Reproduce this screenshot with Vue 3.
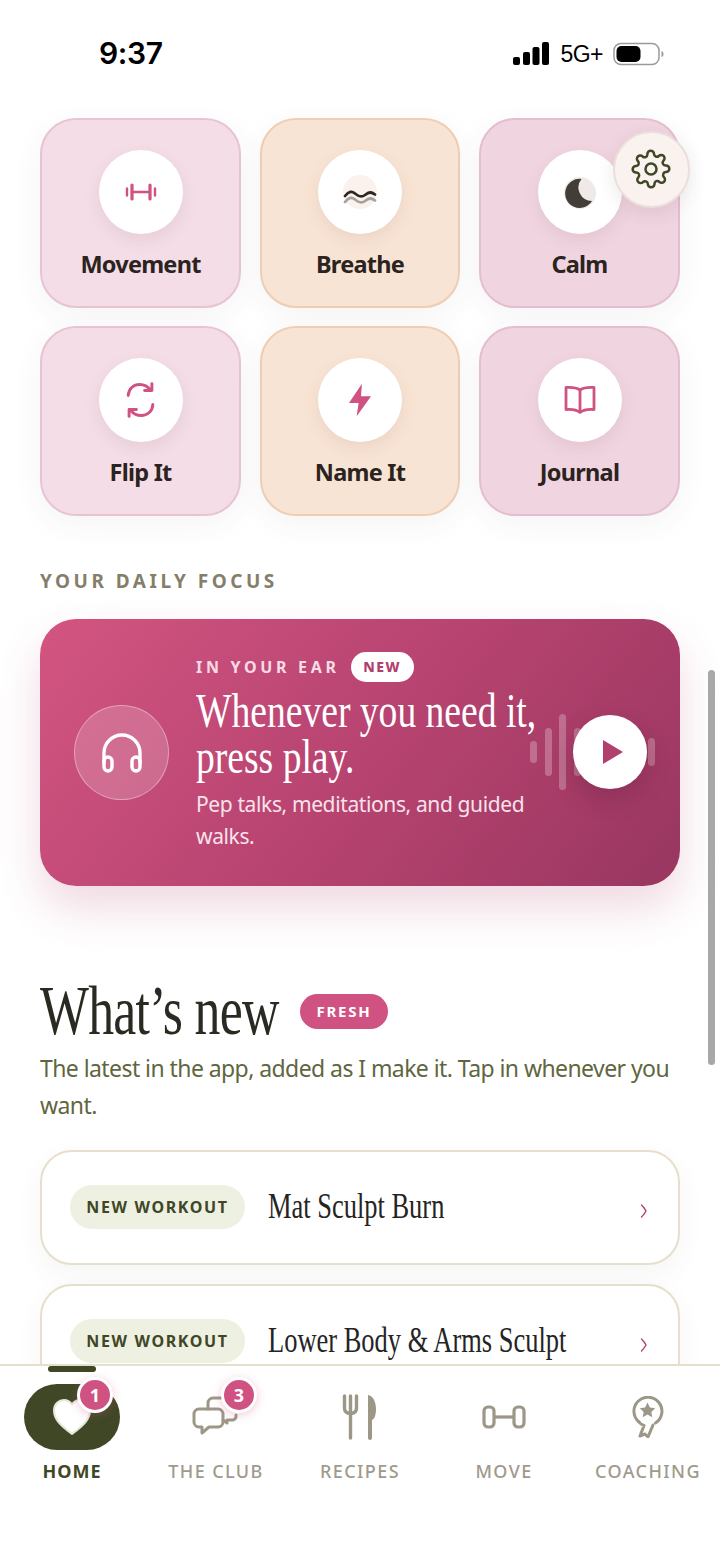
<script setup>
const tiles = [
  { label: 'Movement', tone: 'rose', icon: 'dumbbell' },
  { label: 'Breathe', tone: 'peach', icon: 'wave' },
  { label: 'Calm', tone: 'mauve', icon: 'moon' },
  { label: 'Flip It', tone: 'rose', icon: 'flip' },
  { label: 'Name It', tone: 'peach', icon: 'bolt' },
  { label: 'Journal', tone: 'mauve', icon: 'book' },
]
const news = ['Mat Sculpt Burn', 'Lower Body & Arms Sculpt']
const bars = [22, 48, 76, 48, 28]
</script>

<template>
  <div class="phone">
    <header class="status">
      <span class="time">9:37</span>
      <div class="status-right">
        <svg width="36" height="24" viewBox="0 0 36 24" class="signal">
          <rect x="0" y="15" width="7" height="8" rx="2" />
          <rect x="10" y="10" width="7" height="13" rx="2" />
          <rect x="19.500" y="5" width="7" height="18" rx="2" />
          <rect x="29" y="0" width="7" height="23" rx="2" />
        </svg>
        <span class="net">5G+</span>
        <svg width="51" height="24" viewBox="0 0 51 24" class="battery">
          <rect x="1" y="1.500" width="45" height="21" rx="7" fill="none" stroke="#9a9a9a" stroke-width="1.500" />
          <rect x="3.500" y="4" width="24" height="16" rx="5" fill="#000" />
          <path d="M48.500 9c1.500.5 2 1.500 2 3s-.5 2.500-2 3z" fill="#9a9a9a" />
        </svg>
      </div>
    </header>

    <main class="content">
      <div class="tiles">
        <button v-for="t in tiles" :key="t.label" class="tile" :class="t.tone">
          <span class="disc">
            <svg v-if="t.icon === 'dumbbell'" width="32" height="32" viewBox="0 0 32 32" fill="none" stroke="#cf5282" stroke-linecap="round">
              <path d="M2 12.500v7M30 12.500v7" stroke-width="2.400" />
              <path d="M7 9v14M25 9v14" stroke-width="3.200" />
              <path d="M7 16h18" stroke-width="2.400" />
            </svg>
            <template v-else-if="t.icon === 'wave'">
              <span class="halo"></span>
              <svg class="halo-icon" width="34" height="20" viewBox="0 0 34 20" fill="none" stroke-linecap="round" stroke-width="2.800">
                <path d="M2 9c4-5 7-5 10-2.500s6 4.500 10 1.500 6-3.500 10-.5" stroke="#a5a29c" transform="translate(0 6)" />
                <path d="M2 9c4-5 7-5 10-2.500s6 4.500 10 1.500 6-3.500 10-.5" stroke="#2c2723" />
              </svg>
            </template>
            <template v-else-if="t.icon === 'moon'">
              <span class="halo grey"></span>
              <svg class="moon-icon" width="30" height="30" viewBox="0 0 30 30">
                <path d="M18.500 1A14.500 14.500 0 1 0 29 23 13.500 13.500 0 0 1 18.500 1z" fill="#423e37" />
              </svg>
            </template>
            <svg v-else-if="t.icon === 'flip'" width="31" height="38" viewBox="0 0 34 40" fill="none" stroke="#cf5282" stroke-width="3.200" stroke-linecap="round" stroke-linejoin="round">
              <path d="M3.500 15C4 7 10 3 16 3c5 0 9 2 12 6" />
              <path d="M29.500 2v7.500h-8" />
              <path d="M30.500 25c-.5 8-6.500 12-12.500 12-5 0-9-2-12-6" />
              <path d="M4.500 38v-7.500h8" />
            </svg>
            <svg v-else-if="t.icon === 'bolt'" width="25" height="34" viewBox="0 0 26 34">
              <path d="M14.500 0 1 20h10l-2 14 15-21H13.500z" fill="#cf5282" />
            </svg>
            <svg v-else width="32" height="30" viewBox="0 0 32 30" fill="none" stroke="#cf5282" stroke-width="2.800" stroke-linejoin="round">
              <path d="M16 5C13 3 8 2 2 2.500v22c6-.5 11 .5 14 3 3-2.500 8-3.500 14-3v-22C24 2 19 3 16 5z" />
              <path d="M16 5v22" />
            </svg>
          </span>
          <span class="tile-label">{{ t.label }}</span>
        </button>
      </div>

      <h2 class="eyebrow">YOUR DAILY FOCUS</h2>

      <section class="hero">
        <div class="hero-icon">
          <svg width="42" height="40" viewBox="0 0 42 40" fill="none" stroke="#fff" stroke-width="3.400" stroke-linecap="round">
            <path d="M3 30V20a18 18 0 0 1 36 0v10" />
            <rect x="3" y="24" width="8" height="14" rx="4" />
            <rect x="31" y="24" width="8" height="14" rx="4" />
          </svg>
        </div>
        <div class="hero-copy">
          <div class="hero-top">
            <span class="hero-kicker">IN YOUR EAR</span>
            <span class="hero-new">NEW</span>
          </div>
          <p class="hero-title"><span>Whenever you need it,</span><span>press play.</span></p>
          <p class="hero-sub">Pep talks, meditations, and guided walks.</p>
        </div>
        <div class="hero-play">
          <div class="bars">
            <i v-for="(b, n) in bars" :key="n" :style="{ height: b + 'px' }"></i>
          </div>
          <button class="play">
            <svg width="22" height="26" viewBox="0 0 22 26"><path d="M1 1v24l20-12z" fill="#b2406d" /></svg>
          </button>
        </div>
      </section>

      <div class="new-head">
        <h1 class="new-title"><span>What’s new</span></h1>
        <span class="fresh">FRESH</span>
      </div>
      <p class="new-desc">The latest in the app, added as I make it. Tap in whenever you want.</p>

      <div class="news">
        <a v-for="n in news" :key="n" class="news-card">
          <span class="news-tag">NEW WORKOUT</span>
          <span class="news-name"><span>{{ n }}</span></span>
          <svg class="chev" width="8" height="14" viewBox="0 0 8 14" fill="none" stroke="#b2406d" stroke-width="1.400" stroke-linecap="round"><path d="M1.500 1c2 2 3.500 4 4.500 6-1 2-2.500 4-4.500 6" /></svg>
        </a>
      </div>
    </main>

    <button class="gear">
      <svg width="40" height="40" viewBox="0 0 24 24" fill="none" stroke="#3f4726" stroke-width="1.500" stroke-linecap="round" stroke-linejoin="round">
        <circle cx="12" cy="12" r="3.300" />
        <path d="M19.400 15a1.650 1.650 0 0 0 .33 1.820l.06.06a2 2 0 1 1-2.830 2.830l-.06-.06a1.650 1.650 0 0 0-2.800 1.170V21a2 2 0 0 1-4 0v-.09a1.650 1.650 0 0 0-2.820-1.110l-.06.06a2 2 0 1 1-2.830-2.830l.06-.06a1.650 1.650 0 0 0-1.170-2.800H3a2 2 0 0 1 0-4h.09A1.650 1.650 0 0 0 4.200 7.350l-.06-.06a2 2 0 1 1 2.830-2.830l.06.06a1.650 1.650 0 0 0 2.800-1.170V3a2 2 0 0 1 4 0v.09a1.650 1.650 0 0 0 2.820 1.110l.06-.06a2 2 0 1 1 2.830 2.830l-.06.06a1.650 1.650 0 0 0 1.170 2.800H21a2 2 0 0 1 0 4h-.09a1.650 1.650 0 0 0-1.510 1z" />
      </svg>
    </button>
    <div class="scrollbar"></div>

    <nav class="tabbar">
      <div class="tab active">
        <span class="marker"></span>
        <div class="tab-icon home-pill">
          <svg width="40" height="38" viewBox="0 0 40 38">
            <path d="M20 36C8 27 2 21 2 12.500 2 6 7 2 12 2c3.500 0 6 1.500 8 4.500C22 3.500 24.500 2 28 2c5 0 10 4 10 10.500C38 21 32 27 20 36z" fill="#fff" stroke="#e6e8d6" stroke-width="2" stroke-linejoin="round" />
          </svg>
          <span class="badge home-badge">1</span>
        </div>
        <span class="tab-label">HOME</span>
      </div>
      <div class="tab">
        <div class="tab-icon">
          <svg width="48" height="44" viewBox="0 0 48 44" fill="none" stroke="#9d9788" stroke-width="3" stroke-linecap="round" stroke-linejoin="round">
            <path d="M7 14h19a5 5 0 0 1 5 5v8a5 5 0 0 1-5 5H17l-7 6v-6H7a5 5 0 0 1-5-5v-8a5 5 0 0 1 5-5z" />
            <path d="M16 14V8a5 5 0 0 1 5-5h9M31 25l4 3v-3h6a4 4 0 0 0 3-3v-2" />
          </svg>
          <span class="badge club-badge">3</span>
        </div>
        <span class="tab-label">THE CLUB</span>
      </div>
      <div class="tab">
        <div class="tab-icon">
          <svg width="36" height="48" viewBox="0 0 36 48" fill="none" stroke="#9d9788" stroke-linecap="round">
            <path d="M2.500 3v12c0 4 2.500 5.500 6 5.500s6-1.500 6-5.500V3M8.500 3v42" stroke-width="3.400" />
            <path d="M26 2c5 .5 8 7 8 14 0 6-1.500 10-4 11v18a2 2 0 0 1-4 0z" fill="#9d9788" stroke="none" />
          </svg>
        </div>
        <span class="tab-label">RECIPES</span>
      </div>
      <div class="tab">
        <div class="tab-icon">
          <svg width="44" height="24" viewBox="0 0 44 24" fill="none" stroke="#9d9788" stroke-width="3.200">
            <rect x="2" y="2" width="10" height="20" rx="4" />
            <rect x="32" y="2" width="10" height="20" rx="4" />
            <path d="M12 12h20" />
          </svg>
        </div>
        <span class="tab-label">MOVE</span>
      </div>
      <div class="tab">
        <div class="tab-icon">
          <svg width="32" height="42" viewBox="0 0 32 42" fill="none" stroke="#9d9788" stroke-width="3" stroke-linejoin="round" stroke-linecap="round">
            <path d="M7 26A14 14 0 1 1 23.500 27" />
            <path d="M7 26c1 1.500 3 3 5 3.500L8 40l5-2 3 3 5-12" />
            <path d="M15.500 6.500l2.400 5 5.300.7-3.900 3.700 1 5.300-4.800-2.600-4.800 2.600 1-5.300-3.900-3.700 5.300-.7z" fill="#9d9788" stroke="none" />
          </svg>
        </div>
        <span class="tab-label">COACHING</span>
      </div>
    </nav>
  </div>
</template>

<style>
html, body { margin: 0; background: #fff; }
</style>

<style scoped>
.phone {
  position: relative;
  width: 720px;
  height: 1560px;
  overflow: hidden;
  display: flex;
  flex-direction: column;
  background: #fff;
  font-family: "Noto Sans", sans-serif;
}
.status {
  height: 108px;
  flex: none;
  display: flex;
  justify-content: space-between;
  align-items: flex-start;
  padding: 35px 56px 0 99px;
  box-sizing: border-box;
}
.time {
  font: 600 30px/36px Inter, sans-serif;
  color: #000;
  letter-spacing: -0.4px;
}
.status-right { display: flex; align-items: center; gap: 10px; margin-top: 6px; }
.signal { fill: #000; margin-right: 1px; }
.net {
  font: 500 23px/26px "Liberation Sans", sans-serif;
  letter-spacing: -0.5px;
  color: #000;
}
.content {
  flex: 1;
  min-height: 0;
  overflow: hidden;
  padding: 10px 40px 0;
}
.tiles {
  display: grid;
  grid-template-columns: 201px 200px 201px;
  gap: 18px 19px;
}
.tile {
  height: 190px;
  box-sizing: border-box;
  border-radius: 36px;
  border: 2px solid;
  padding: 30px 0 0;
  display: flex;
  flex-direction: column;
  align-items: center;
  box-shadow: 0 8px 30px rgba(110, 70, 80, .06);
  font-family: inherit;
}
.rose { background: #f4dde7; border-color: #e8c3d4; }
.peach { background: #f8e4d4; border-color: #efcdb3; }
.mauve { background: #f0d4e0; border-color: #e5bdd0; }
.disc {
  position: relative;
  width: 84px;
  height: 84px;
  border-radius: 50%;
  background: #fff;
  display: flex;
  align-items: center;
  justify-content: center;
  box-shadow: 0 6px 16px rgba(120, 80, 90, .1);
}
.halo {
  position: absolute;
  left: 25px;
  top: 25px;
  width: 34px;
  height: 34px;
  border-radius: 50%;
  background: #fbf1ed;
}
.halo.grey { background: #efe9e8; width: 32px; height: 32px; left: 26px; top: 27px; }
.halo-icon { position: relative; top: 5px; }
.moon-icon { position: relative; left: -2px; top: 1px; }
.tile-label {
  margin-top: 14px;
  font: 700 23.500px/32px "Noto Sans", sans-serif;
  letter-spacing: -0.75px;
  color: #2b2320;
}
.eyebrow {
  margin: 52px 0 0;
  font: 700 19px/26px "Noto Sans", sans-serif;
  letter-spacing: 3.500px;
  color: #857e6b;
}
.hero {
  margin-top: 25px;
  height: 267px;
  box-sizing: border-box;
  border-radius: 36px;
  background: linear-gradient(128deg, #d35581 0%, #b5426f 55%, #983760 100%);
  box-shadow: 0 22px 44px rgba(178, 64, 109, .2);
  display: flex;
  align-items: center;
  padding: 0 26px 0 34px;
  position: relative;
}
.hero-icon {
  flex: none;
  width: 95px;
  height: 95px;
  box-sizing: border-box;
  border-radius: 50%;
  background: rgba(255, 255, 255, .18);
  border: 1.500px solid rgba(255, 255, 255, .35);
  display: flex;
  align-items: center;
  justify-content: center;
}
.hero-copy { margin-left: 27px; width: 345px; color: #fff; }
.hero-top { display: flex; align-items: center; gap: 11px; margin-top: -1px; }
.hero-kicker {
  font: 700 16px/30px "Noto Sans", sans-serif;
  letter-spacing: 3.700px;
  color: #f8dbe6;
}
.hero-new {
  width: 63px;
  height: 30px;
  border-radius: 15px;
  background: #fff;
  color: #b2406d;
  font: 800 14px/30px "Noto Sans", sans-serif;
  letter-spacing: 1.500px;
  text-align: center;
}
.hero-title {
  margin: 6px 0 0;
  font: 400 48px/46px "Liberation Serif", serif;
  display: flex;
  flex-direction: column;
  white-space: nowrap;
}
.hero-title span {
  display: block;
  transform: scaleX(.783);
  transform-origin: left center;
}
.hero-sub {
  margin: 8px 0 0;
  font: 400 21px/32px "Noto Sans", sans-serif;
  letter-spacing: -0.38px;
  color: #f9e3eb;
}
.hero-play { position: absolute; right: 33px; top: 96px; }
.bars {
  position: absolute;
  left: -43px;
  top: 6px;
  height: 62px;
  display: flex;
  align-items: center;
  gap: 7.500px;
}
.bars i {
  display: block;
  width: 7px;
  border-radius: 4px;
  background: rgba(255, 255, 255, .25);
  flex: none;
}
.bars i:nth-child(4) { margin-right: 59.500px; }
.play {
  position: relative;
  width: 74px;
  height: 74px;
  border: 0;
  border-radius: 50%;
  background: #fff;
  box-shadow: 0 10px 24px rgba(70, 20, 40, .22);
  display: flex;
  align-items: center;
  justify-content: center;
  padding: 0 0 0 5px;
}
.new-head { margin-top: 87px; display: flex; align-items: center; gap: 21px; height: 76px; }
.new-title {
  margin: 0;
  width: 239px;
  flex: none;
  font: 400 70px/76px "Liberation Serif", serif;
  letter-spacing: -1px;
  color: #2b2a22;
  white-space: nowrap;
}
.new-title span {
  display: block;
  transform: scaleX(.74);
  transform-origin: left center;
}
.fresh {
  width: 88px;
  height: 35px;
  border-radius: 18px;
  background: #cf5282;
  color: #fff;
  font: 700 15px/35px "Noto Sans", sans-serif;
  letter-spacing: 1.800px;
  text-align: center;
}
.new-desc {
  margin: 0;
  padding-top: 1px;
  font: 400 23px/37px "Noto Sans", sans-serif;
  letter-spacing: -0.57px;
  color: #5f6640;
}
.news { margin-top: 26px; display: flex; flex-direction: column; gap: 19px; }
.news-card {
  height: 115px;
  flex: none;
  box-sizing: border-box;
  border: 2px solid #e7dfcd;
  border-radius: 32px;
  background: #fff;
  box-shadow: 0 10px 26px rgba(90, 80, 60, .06);
  display: flex;
  align-items: center;
  padding: 0 30px 0 28px;
}
.news-tag {
  width: 175px;
  height: 44px;
  flex: none;
  margin-bottom: 2px;
  border-radius: 22px;
  background: #eef0e2;
  color: #3f4726;
  font: 700 16px/44px "Noto Sans", sans-serif;
  letter-spacing: 1.650px;
  text-align: center;
}
.news-name {
  margin: 0 0 4px 23px;
  flex: 1 1 0;
  min-width: 0;
  font: 400 36px/44px "Liberation Serif", serif;
  color: #26241f;
  white-space: nowrap;
}
.news-name span {
  display: block;
  transform: scaleX(.735);
  transform-origin: left center;
}
.chev { flex: none; margin-top: 6px; }
.gear {
  position: absolute;
  left: 613px;
  top: 131px;
  width: 77px;
  height: 77px;
  box-sizing: border-box;
  border-radius: 50%;
  border: 2px solid #eadfdc;
  background: #f9f2ef;
  display: flex;
  align-items: center;
  justify-content: center;
  padding: 0 1px 2px 0;
  box-shadow: 0 6px 18px rgba(80, 60, 50, .1);
}
.scrollbar {
  position: absolute;
  left: 708px;
  top: 670px;
  width: 7px;
  height: 395px;
  border-radius: 4px;
  background: #a8a8a8;
}
.tabbar {
  height: 196px;
  flex: none;
  box-sizing: border-box;
  border-top: 2px solid #e7dfcd;
  background: #fff;
  display: grid;
  grid-template-columns: repeat(5, 144px);
  position: relative;
}
.tab {
  position: relative;
  display: flex;
  flex-direction: column;
  align-items: center;
  padding-top: 18px;
}
.tab-icon {
  position: relative;
  width: 96px;
  height: 66px;
  display: flex;
  align-items: center;
  justify-content: center;
}
.home-pill { background: #3f4726; border-radius: 33px; }
.marker {
  position: absolute;
  top: 0;
  left: 48px;
  width: 48px;
  height: 6px;
  border-radius: 3px;
  background: #3f4726;
}
.badge {
  position: absolute;
  box-sizing: content-box;
  border-radius: 50%;
  background: #cf5282;
  border: 3px solid #fff;
  color: #fff;
  text-align: center;
  font: 700 18px/30px "Noto Sans", sans-serif;
  width: 30px;
  height: 30px;
  box-shadow: 0 2px 10px rgba(207, 82, 130, .3);
}
.home-badge { left: 53px; top: -7px; }
.club-badge { left: 53px; top: -7px; }
.tab-label {
  margin-top: 6px;
  font: 500 18px/30px "Noto Sans", sans-serif;
  letter-spacing: 1.400px;
  color: #a09a8c;
  white-space: nowrap;
}
.active .tab-label { font-weight: 700; letter-spacing: 1px; color: #3f4726; }
</style>
